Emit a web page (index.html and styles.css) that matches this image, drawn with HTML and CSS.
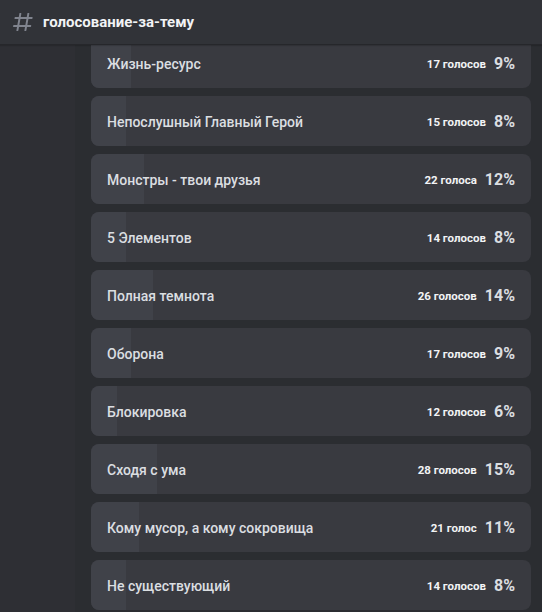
FILE: index.html
```html
<!DOCTYPE html>
<html lang="ru">
<head>
<meta charset="utf-8">
<title>голосование-за-тему</title>
<link rel="stylesheet" href="styles.css">
</head>
<body>
<div class="page">
  <header class="topbar">
    <svg class="hash" viewBox="0 0 24 24" width="24" height="24" aria-hidden="true">
      <path fill="currentColor" fill-rule="evenodd" d="M5.88657 21C5.57547 21 5.3399 20.7189 5.39427 20.4126L6.00001 17H2.59511C2.28449 17 2.04905 16.7198 2.10259 16.4138L2.27759 15.4138C2.31946 15.1746 2.52722 15 2.77011 15H6.35001L7.41001 9H4.00511C3.69449 9 3.45905 8.71977 3.51259 8.41381L3.68759 7.41381C3.72946 7.17456 3.93722 7 4.18011 7H7.76001L8.39677 3.41262C8.43914 3.17391 8.64664 3 8.88907 3H9.87344C10.1845 3 10.4201 3.28107 10.3657 3.58738L9.76001 7H15.76L16.3968 3.41262C16.4391 3.17391 16.6466 3 16.8891 3H17.8734C18.1845 3 18.4201 3.28107 18.3657 3.58738L17.76 7H21.1649C21.4755 7 21.711 7.28023 21.6574 7.58619L21.4824 8.58619C21.4406 8.82544 21.2328 9 20.9899 9H17.41L16.35 15H19.7549C20.0655 15 20.301 15.2802 20.2474 15.5862L20.0724 16.5862C20.0306 16.8254 19.8228 17 19.5799 17H16L15.3632 20.5874C15.3209 20.8261 15.1134 21 14.8709 21H13.8866C13.5755 21 13.3399 20.7189 13.3943 20.4126L14 17H8.00001L7.36325 20.5874C7.32088 20.8261 7.11337 21 6.87094 21H5.88657ZM9.41045 9L8.35045 15H14.3504L15.4104 9H9.41045Z"/>
    </svg>
    <h1 class="title">голосование-за-тему</h1>
  </header>
  <main class="main">
    <div class="gutter"></div>
    <div class="content">
      <ul class="answers">
        <li class="answer"><div class="fill" style="width:9%"></div><span class="label">Жизнь-ресурс</span><span class="votes">17 голосов</span><span class="pct">9%</span></li>
        <li class="answer"><div class="fill" style="width:8%"></div><span class="label">Непослушный Главный Герой</span><span class="votes">15 голосов</span><span class="pct">8%</span></li>
        <li class="answer"><div class="fill" style="width:12%"></div><span class="label">Монстры - твои друзья</span><span class="votes">22 голоса</span><span class="pct">12%</span></li>
        <li class="answer"><div class="fill" style="width:8%"></div><span class="label">5 Элементов</span><span class="votes">14 голосов</span><span class="pct">8%</span></li>
        <li class="answer"><div class="fill" style="width:14%"></div><span class="label">Полная темнота</span><span class="votes">26 голосов</span><span class="pct">14%</span></li>
        <li class="answer"><div class="fill" style="width:9%"></div><span class="label">Оборона</span><span class="votes">17 голосов</span><span class="pct">9%</span></li>
        <li class="answer"><div class="fill" style="width:6%"></div><span class="label">Блокировка</span><span class="votes">12 голосов</span><span class="pct">6%</span></li>
        <li class="answer"><div class="fill" style="width:15%"></div><span class="label">Сходя с ума</span><span class="votes">28 голосов</span><span class="pct">15%</span></li>
        <li class="answer"><div class="fill" style="width:11%"></div><span class="label">Кому мусор, а кому сокровища</span><span class="votes">21 голос</span><span class="pct">11%</span></li>
        <li class="answer"><div class="fill" style="width:8%"></div><span class="label">Не существующий</span><span class="votes">14 голосов</span><span class="pct">8%</span></li>
      </ul>
    </div>
  </main>
</div>
</body>
</html>
```

FILE: styles.css
```css
html, body {
  margin: 0;
  padding: 0;
  height: 100%;
  background: #2b2d31;
  font-family: Roboto, "Noto Sans", sans-serif;
}

.page {
  display: flex;
  flex-direction: column;
  height: 612px;
  overflow: hidden;
}

.topbar {
  position: relative;
  z-index: 2;
  flex: 0 0 auto;
  height: 44px;
  display: flex;
  align-items: center;
  padding-left: 11px;
  gap: 8px;
  background: #313338;
  border-bottom: 1px solid #26272b;
  box-shadow: 0 1px 1px rgba(0, 0, 0, 0.15);
}

.hash {
  color: #80848e;
  flex: 0 0 auto;
}

.title {
  margin: 0;
  font-size: 15px;
  font-weight: 700;
  color: #f2f3f5;
}

.main {
  flex: 1 1 auto;
  display: flex;
  overflow: hidden;
}

.gutter {
  width: 75px;
  flex: 0 0 auto;
  background: #2e2f34;
}

.content {
  flex: 1 1 auto;
  padding-left: 16px;
  background: #2b2d31;
}

.answers {
  list-style: none;
  margin: -7px 0 0 0;
  padding: 0;
  width: 440px;
  display: flex;
  flex-direction: column;
  gap: 8px;
}

.answer {
  position: relative;
  height: 50px;
  display: flex;
  align-items: center;
  padding: 1px 16px 0;
  border-radius: 8px;
  background: #393a40;
  overflow: hidden;
  box-sizing: border-box;
}

.fill {
  position: absolute;
  left: 0;
  top: 0;
  bottom: 0;
  background: #404249;
}

.label {
  position: relative;
  flex: 1 1 auto;
  font-size: 14px;
  font-weight: 500;
  color: #dbdee1;
}

.votes {
  position: relative;
  font-size: 11.5px;
  font-weight: 700;
  color: #f2f3f5;
  margin-right: 8px;
}

.pct {
  position: relative;
  font-size: 16px;
  font-weight: 700;
  color: #dbdee1;
}
```
